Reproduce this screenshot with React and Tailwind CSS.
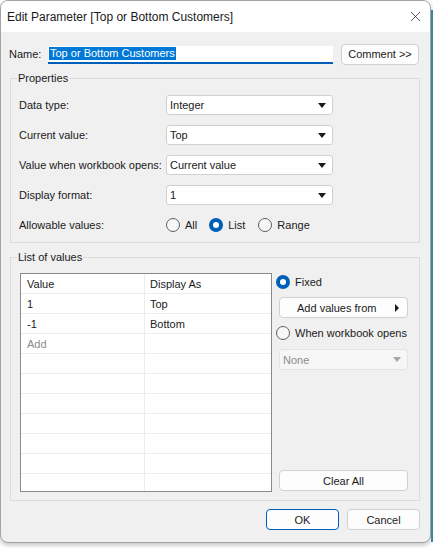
import { X } from 'lucide-react'

const Caret = ({ color = '#1a1a1a' }) => (
  <svg width="8" height="5" viewBox="0 0 8 5" className="shrink-0">
    <path d="M0 0 L8 0 L4 5 Z" fill={color} />
  </svg>
)

const Select = ({ value, disabled = false, className = '' }) => (
  <div
    className={`flex items-center justify-between rounded-[3px] border pl-[3px] pr-[6px] ${
      disabled ? 'border-[#e3e3e3] bg-[#f6f6f6] text-[#8c8c8c]' : 'border-[#d0d0d0] bg-white text-[#1a1a1a]'
    } ${className}`}
  >
    <span>{value}</span>
    <Caret color={disabled ? '#a8a8a8' : '#1a1a1a'} />
  </div>
)

const Radio = ({ checked = false }) =>
  checked ? (
    <span className="flex h-[14px] w-[14px] shrink-0 items-center justify-center rounded-full bg-[#005fb8]">
      <span className="h-[6px] w-[6px] rounded-full bg-white" />
    </span>
  ) : (
    <span className="h-[14px] w-[14px] shrink-0 rounded-full border border-[#5f5f5f] bg-[#f7f7f7]" />
  )

const Button = ({ children, primary = false, split = false, className = '' }) => (
  <div
    className={`flex items-center whitespace-nowrap rounded-[4px] border bg-[#fdfdfd] ${
      split ? 'justify-between' : 'justify-center'
    } ${primary ? 'border-[#005fb8]' : 'border-[#d0d0d0]'} ${className}`}
  >
    {children}
  </div>
)

const properties = [
  ['Data type:', 'Integer'],
  ['Current value:', 'Top'],
  ['Value when workbook opens:', 'Current value'],
  ['Display format:', '1'],
]

const rows = [
  ['Value', 'Display As'],
  ['1', 'Top'],
  ['-1', 'Bottom'],
  ['Add', ''],
  ['', ''],
  ['', ''],
  ['', ''],
  ['', ''],
  ['', ''],
  ['', ''],
  ['', ''],
]

const App = () => {
  return (
    <div
      className="flex h-[548px] w-[433px] overflow-hidden bg-white text-[11px] leading-[14px] text-[#1a1a1a]"
      style={{ fontFamily: '"Liberation Sans", Arial, sans-serif' }}
    >
      <div className="flex h-[543px] w-[431px] shrink-0 flex-col overflow-hidden rounded-[8px] border border-[#a3a3a3] bg-[#f0f0f0] shadow-[0_2px_5px_rgba(0,0,0,0.25)]">
        {/* title bar */}
        <div className="flex h-[31px] shrink-0 items-center justify-between bg-white pl-[6px] pr-[6px]">
          <span className="text-[12px]">Edit Parameter [Top or Bottom Customers]</span>
          <X size={17} strokeWidth={1} className="text-[#1a1a1a]" />
        </div>

        {/* name row */}
        <div className="mt-[12px] flex h-[20px] items-center">
          <span className="ml-[8px] w-[39px]">Name:</span>
          <div className="mt-[1px] flex h-[18px] w-[285px] items-center border-b-2 border-[#005fb8] bg-white pl-[1px]">
            <span className="bg-[#0078d7] px-[1px] leading-[13px] text-white">Top or Bottom Customers</span>
          </div>
          <Button className="ml-[8px] h-[21px] w-[78px]">Comment &gt;&gt;</Button>
        </div>

        {/* properties */}
        <fieldset className="ml-[9px] mt-[7px] w-[410px] border border-[#dcdcdc] pb-[7px] pt-[10px]">
          <legend className="ml-[6px] px-[1px] leading-[14px]">Properties</legend>
          <div className="grid grid-cols-[147px_167px] gap-y-[10px] pl-[8px]">
            {properties.map(([label, value]) => (
              <div key={label} className="contents">
                <div className="flex h-[20px] items-center">{label}</div>
                <Select value={value} className="h-[20px]" />
              </div>
            ))}
            <div className="flex h-[20px] items-center">Allowable values:</div>
            <div className="flex h-[20px] items-center">
              <Radio />
              <span className="ml-[5px] mr-[12px]">All</span>
              <Radio checked />
              <span className="ml-[5px] mr-[13px]">List</span>
              <Radio />
              <span className="ml-[5px]">Range</span>
            </div>
          </div>
        </fieldset>

        {/* list of values */}
        <fieldset className="ml-[9px] mt-[7px] w-[410px] border border-[#dcdcdc] pb-[8px] pt-[9px]">
          <legend className="ml-[6px] px-[1px] leading-[14px]">List of values</legend>
          <div className="flex pl-[9px]">
            <div className="h-[219px] w-[252px] overflow-hidden border border-[#8a8a8a] bg-white">
              {rows.map(([value, display], i) => (
                <div key={i} className="grid h-[20px] grid-cols-[124px_1fr] border-b border-[#ececec]">
                  <div className={`flex items-center border-r border-[#ececec] pl-[6px] ${value === 'Add' ? 'text-[#8c8c8c]' : ''}`}>
                    {value}
                  </div>
                  <div className="flex items-center pl-[5px]">{display}</div>
                </div>
              ))}
            </div>

            <div className="ml-[7px] flex h-[219px] w-[129px] flex-col">
              <div className="-ml-[3px] flex h-[18px] items-center">
                <Radio checked />
                <span className="ml-[5px]">Fixed</span>
              </div>
              <Button split className="mt-[6px] h-[21px] pl-[17px] pr-[8px]">
                <span>Add values from</span>
                <svg width="4" height="8" viewBox="0 0 4 8">
                  <path d="M0 0 L4 4 L0 8 Z" fill="#1a1a1a" />
                </svg>
              </Button>
              <div className="-ml-[3px] mt-[6px] flex h-[18px] items-center whitespace-nowrap">
                <Radio />
                <span className="ml-[5px]">When workbook opens</span>
              </div>
              <Select value="None" disabled className="mt-[7px] h-[21px]" />
              <Button className="mb-[1px] mt-auto h-[21px]">Clear All</Button>
            </div>
          </div>
        </fieldset>

        {/* footer */}
        <div className="mt-[8px] flex justify-end gap-[8px] pr-[10px]">
          <Button primary className="h-[21px] w-[73px]">OK</Button>
          <Button className="h-[21px] w-[73px]">Cancel</Button>
        </div>
      </div>
      <div className="mt-[10px] h-[532px] w-[2px] shrink-0 bg-[#3b8792]" />
    </div>
  )
}

export default App
